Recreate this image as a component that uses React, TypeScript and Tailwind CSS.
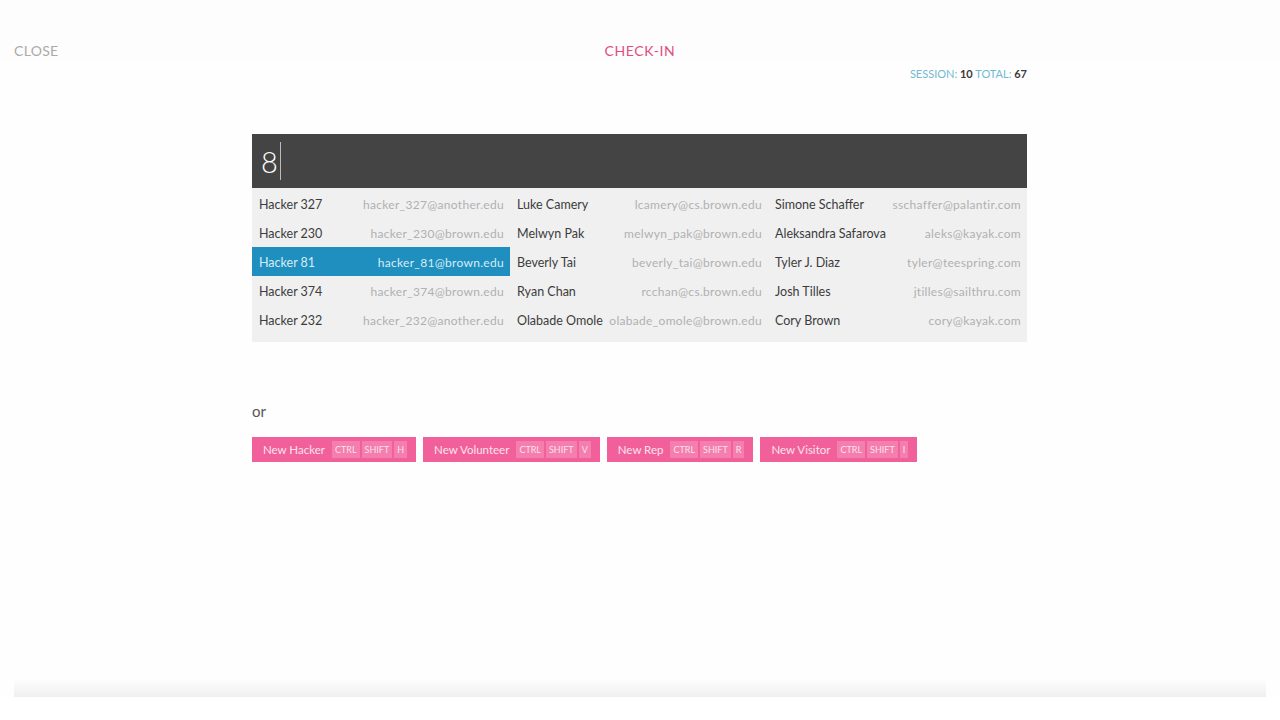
import React from "react";

const cols = [
  [
    ["Hacker 327", "hacker_327@another.edu"],
    ["Hacker 230", "hacker_230@brown.edu"],
    ["Hacker 81", "hacker_81@brown.edu"],
    ["Hacker 374", "hacker_374@brown.edu"],
    ["Hacker 232", "hacker_232@another.edu"],
  ],
  [
    ["Luke Camery", "lcamery@cs.brown.edu"],
    ["Melwyn Pak", "melwyn_pak@brown.edu"],
    ["Beverly Tai", "beverly_tai@brown.edu"],
    ["Ryan Chan", "rcchan@cs.brown.edu"],
    ["Olabade Omole", "olabade_omole@brown.edu"],
  ],
  [
    ["Simone Schaffer", "sschaffer@palantir.com"],
    ["Aleksandra Safarova", "aleks@kayak.com"],
    ["Tyler J. Diaz", "tyler@teespring.com"],
    ["Josh Tilles", "jtilles@sailthru.com"],
    ["Cory Brown", "cory@kayak.com"],
  ],
];

const buttons = [
  ["New Hacker", "H"],
  ["New Volunteer", "V"],
  ["New Rep", "R"],
  ["New Visitor", "I"],
];

function Kbd({ children }: { children: React.ReactNode }) {
  return (
    <span className="h-[17px] px-[3px] flex items-center bg-[#f47eae] text-[9px] text-[#fde0eb] leading-none">
      {children}
    </span>
  );
}

export default function App() {
  return (
    <div
      className="w-full h-[720px] bg-white flex flex-col"
      style={{ fontFamily: "Lato, 'Open Sans', sans-serif" }}
    >
      <div className="h-[697px] flex flex-col bg-[#fefefe]">
        <div className="h-[62px] bg-[#fdfdfd] pt-[42px] px-[14px] grid grid-cols-3 text-[14px] leading-[18px]">
          <div className="text-[#aaaaaa] tracking-[0.3px]">CLOSE</div>
          <div className="text-center text-[#e24c82] tracking-[0.6px]">CHECK-IN</div>
          <div />
        </div>

        <div className="w-[775px] ml-[252px]">
          <div className="mt-[4px] text-right text-[11px] leading-[16px]">
            <span className="text-[#72b9d2]">SESSION: </span>
            <span className="text-[#3a3a3a] font-bold">10</span>
            <span className="text-[#72b9d2]"> TOTAL: </span>
            <span className="text-[#3a3a3a] font-bold">67</span>
          </div>

          <div className="mt-[52px] h-[54px] bg-[#444444] flex items-center pl-[9px]">
            <span className="text-white text-[29px] font-light leading-none">8</span>
            <span className="ml-[2px] w-[1px] h-[38px] bg-[#bbbbbb]" />
          </div>

          <div className="bg-[#f0f0f0] pt-[1px] pb-[8px] grid grid-cols-[258px_258px_259px]">
            {cols.map((col, ci) => (
              <div key={ci} className="flex flex-col">
                {col.map(([name, email], ri) => {
                  const active = ci === 0 && ri === 2;
                  return (
                    <div
                      key={ri}
                      className={`h-[29px] flex items-center justify-between gap-[4px] pt-[3px] pl-[7px] pr-[6px] ${
                        active ? "bg-[#1f8fbf]" : ""
                      }`}
                    >
                      <span
                        className={`text-[12.5px] whitespace-nowrap ${
                          active ? "text-[#d7ecf5]" : "text-[#3c3c3c]"
                        }`}
                      >
                        {name}
                      </span>
                      <span
                        className={`text-[12px] tracking-[0.3px] whitespace-nowrap ${
                          active ? "text-[#d7ecf5]" : "text-[#b0b0b0]"
                        }`}
                      >
                        {email}
                      </span>
                    </div>
                  );
                })}
              </div>
            ))}
          </div>

          <div className="mt-[60px] text-[15px] leading-[18px] text-[#555555]">or</div>

          <div className="mt-[17px] flex gap-[7px]">
            {buttons.map(([label, key]) => (
              <div
                key={label}
                className="h-[25px] bg-[#f1609a] flex items-center pl-[11px] pr-[9px]"
              >
                <span className="text-[11.5px] text-[#fde3ee] mr-[7px] whitespace-nowrap">
                  {label}
                </span>
                <div className="flex gap-[2px]">
                  <Kbd>CTRL</Kbd>
                  <Kbd>SHIFT</Kbd>
                  <Kbd>{key}</Kbd>
                </div>
              </div>
            ))}
          </div>
        </div>

        <div className="mt-auto mx-[14px] h-[18px] bg-gradient-to-b from-[#fefefe] to-[#efefef]" />
      </div>
    </div>
  );
}
